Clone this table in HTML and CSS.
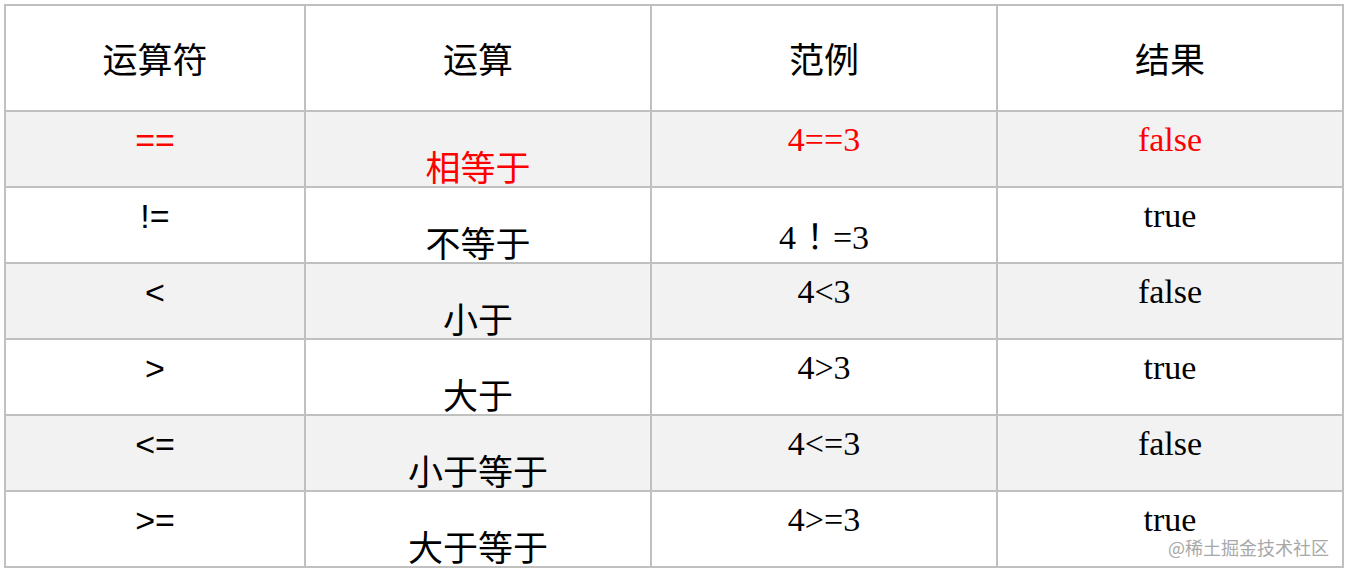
FILE: index.html
```html
<!DOCTYPE html>
<html lang="zh-CN">
<head>
<meta charset="utf-8">
<link rel="stylesheet" href="styles.css">
</head>
<body>
<div class="page">
  <table class="ops">
    <colgroup>
      <col class="c1"><col class="c2"><col class="c3"><col class="c4">
    </colgroup>
    <thead>
      <tr class="head">
        <th><span class="hd">运算符</span></th><th><span class="hd">运算</span></th><th><span class="hd">范例</span></th><th><span class="hd">结果</span></th>
      </tr>
    </thead>
    <tbody>
      <tr class="alt red">
        <td class="sym"><span class="top">==</span></td><td class="zh">相等于</td><td class="ser"><span class="top">4==3</span></td><td class="ser"><span class="top">false</span></td>
      </tr>
      <tr>
        <td class="sym"><span class="top">!=</span></td><td class="zh">不等于</td><td class="ser low"><span class="bot">4<span class="fw">！</span>=3</span></td><td class="ser"><span class="top">true</span></td>
      </tr>
      <tr class="alt">
        <td class="sym"><span class="top">&lt;</span></td><td class="zh">小于</td><td class="ser"><span class="top">4&lt;3</span></td><td class="ser"><span class="top">false</span></td>
      </tr>
      <tr>
        <td class="sym"><span class="top">&gt;</span></td><td class="zh">大于</td><td class="ser"><span class="top">4&gt;3</span></td><td class="ser"><span class="top">true</span></td>
      </tr>
      <tr class="alt">
        <td class="sym"><span class="top">&lt;=</span></td><td class="zh">小于等于</td><td class="ser"><span class="top">4&lt;=3</span></td><td class="ser"><span class="top">false</span></td>
      </tr>
      <tr>
        <td class="sym"><span class="top">&gt;=</span></td><td class="zh">大于等于</td><td class="ser"><span class="top">4&gt;=3</span></td><td class="ser"><span class="top">true</span></td>
      </tr>
    </tbody>
  </table>
  <div class="mark">@稀土掘金技术社区</div>
</div>
</body>
</html>
```
FILE: styles.css
```css
html, body {
  margin: 0;
  padding: 0;
  background: #ffffff;
}
.page {
  position: relative;
  width: 1349px;
  height: 577px;
  padding: 4px 0 0 4px;
  box-sizing: border-box;
}
.ops {
  border-collapse: collapse;
  table-layout: fixed;
  width: 1338px;
  border: 2px solid #c0c0c0;
}
.c1 { width: 300px; }
.c2 { width: 346px; }
.c3 { width: 346px; }
.c4 { width: 346px; }
.ops th, .ops td {
  border: 2px solid #c0c0c0;
  text-align: center;
  padding: 0;
  color: #000;
}
.head th {
  height: 104px;
  font-family: "Noto Sans CJK SC", "Noto Sans", sans-serif;
  font-weight: normal;
  font-size: 35px;
  line-height: 40px;
  vertical-align: middle;
}
.hd {
  display: block;
}
.ops tbody td {
  height: 74px;
}
.alt td {
  background: #f2f2f2;
}
.red td {
  color: #ff0000;
}
.sym {
  font-family: "Liberation Sans", Arial, sans-serif;
  font-size: 34px;
  line-height: 40px;
  vertical-align: top;
}
.ser {
  font-family: "Liberation Serif", "Times New Roman", serif;
  font-size: 34px;
  line-height: 40px;
  vertical-align: top;
}
.top {
  display: block;
  padding-top: 8px;
}
.ser.low {
  vertical-align: bottom;
}
.bot {
  display: block;
  padding-bottom: 4px;
}
.fw {
  font-family: "Noto Sans CJK JP", "Noto Sans CJK SC", sans-serif;
  margin: 0 1px 0 2px;
}
.zh {
  font-family: "Noto Sans CJK SC", "Noto Sans", sans-serif;
  font-size: 35px;
  line-height: 40px;
  vertical-align: bottom;
}
.mark {
  position: absolute;
  right: 20px;
  top: 536px;
  font-family: "Noto Sans CJK SC", "Noto Sans", sans-serif;
  font-size: 18px;
  line-height: 22px;
  color: #a8a8a8;
}
```
